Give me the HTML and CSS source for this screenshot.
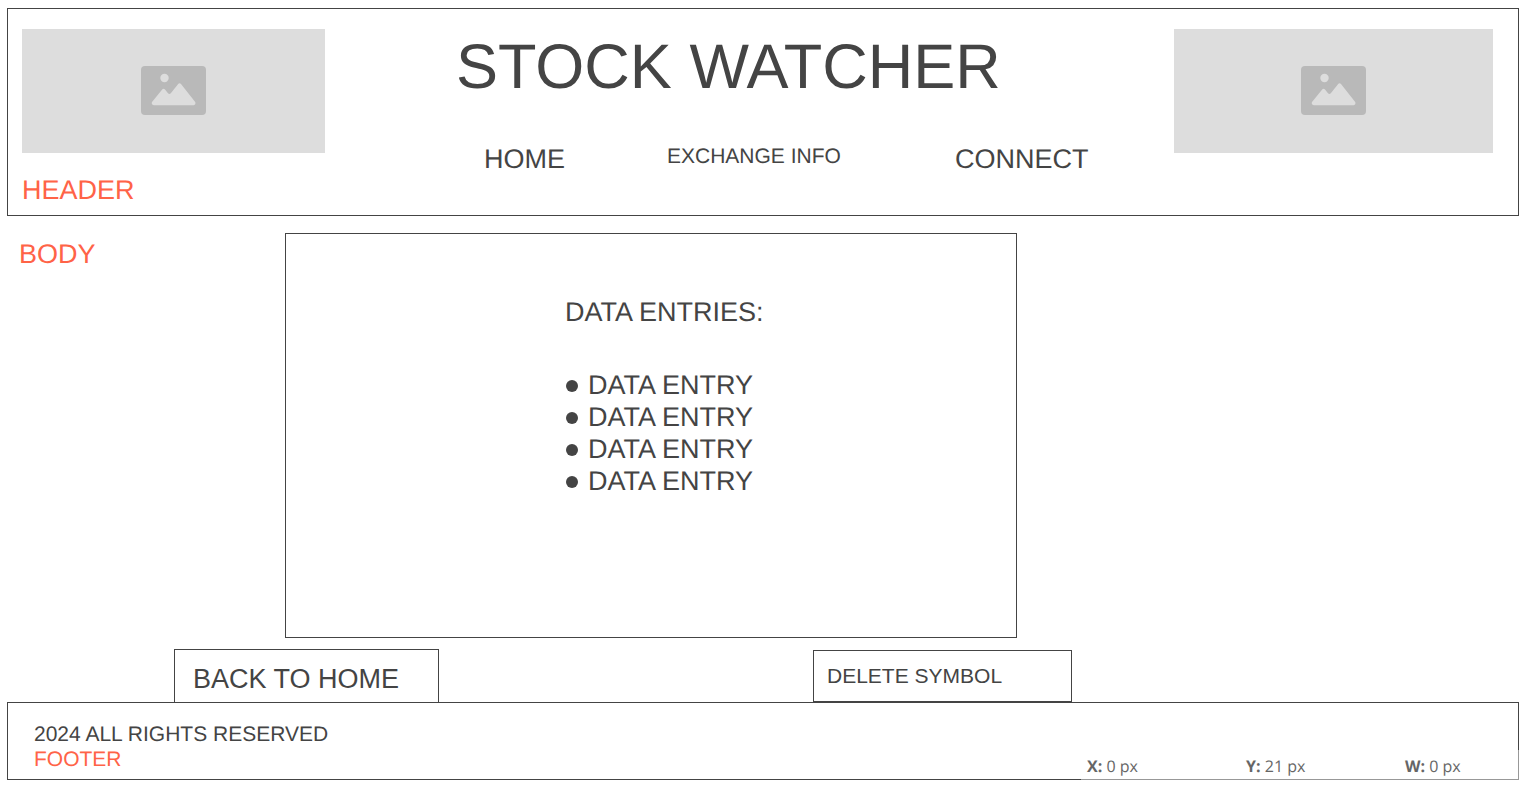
FILE: index.html
```html
<!DOCTYPE html>
<html lang="en">
<head>
<meta charset="utf-8">
<title>Stock Watcher</title>
<link rel="stylesheet" href="styles.css">
</head>
<body>
<header class="header">
  <div class="header-side">
    <div class="placeholder">
      <svg class="placeholder-icon" viewBox="0 0 66 50" aria-hidden="true">
        <rect class="icon-frame" x="0" y="0" width="65" height="49" rx="4"/>
        <circle class="icon-cut" cx="23.5" cy="12" r="4.2"/>
        <path class="icon-cut" d="M11 36 L21.2 23.4 Q22.6 21.9 24 23.4 L27 27.2 Q28.3 28.6 29.8 27.2 L37 18.2 Q38.6 16.4 40.2 18.2 L54.2 36 Q55.2 38.4 52.6 39.2 H12.8 Q10 38.4 11 36Z"/>
      </svg>
    </div>
    <span class="section-label">HEADER</span>
  </div>
  <div class="header-center">
    <h1 class="title">STOCK WATCHER</h1>
    <nav class="nav">
      <a class="nav-link" href="#">HOME</a>
      <a class="nav-link nav-link-small" href="#">EXCHANGE INFO</a>
      <a class="nav-link" href="#">CONNECT</a>
    </nav>
  </div>
  <div class="placeholder">
    <svg class="placeholder-icon" viewBox="0 0 66 50" aria-hidden="true">
      <rect class="icon-frame" x="0" y="0" width="65" height="49" rx="4"/>
      <circle class="icon-cut" cx="23.5" cy="12" r="4.2"/>
      <path class="icon-cut" d="M11 36 L21.2 23.4 Q22.6 21.9 24 23.4 L27 27.2 Q28.3 28.6 29.8 27.2 L37 18.2 Q38.6 16.4 40.2 18.2 L54.2 36 Q55.2 38.4 52.6 39.2 H12.8 Q10 38.4 11 36Z"/>
    </svg>
  </div>
</header>
<main class="main">
  <div class="content">
    <span class="section-label body-label">BODY</span>
    <section class="panel">
      <h2 class="panel-title">DATA ENTRIES:</h2>
      <ul class="entries">
        <li class="entry">DATA ENTRY</li>
        <li class="entry">DATA ENTRY</li>
        <li class="entry">DATA ENTRY</li>
        <li class="entry">DATA ENTRY</li>
      </ul>
    </section>
  </div>
  <div class="actions">
    <button class="button button-back" type="button">BACK TO HOME</button>
    <button class="button button-delete" type="button">DELETE SYMBOL</button>
  </div>
</main>
<footer class="footer">
  <div>2024 ALL RIGHTS RESERVED</div>
  <div class="footer-label">FOOTER</div>
  <div class="status">
    <span><b>X:</b> 0 px</span>
    <span><b>Y:</b> 21 px</span>
    <span><b>W:</b> 0 px</span>
  </div>
</footer>
</body>
</html>
```
FILE: styles.css
```css
* { box-sizing: border-box; }

body {
  margin: 8px 7px;
  background: #fff;
  color: #444;
  font: 27px/32px "Liberation Sans", Arial, sans-serif;
  text-rendering: geometricPrecision;
}

.header {
  display: grid;
  grid-template-columns: 303fr 849fr 319fr;
  align-items: start;
  padding: 20px 25px 9px 14px;
  border: 1px solid #444;
}

.header-side {
  display: flex;
  flex-direction: column;
  gap: 21px;
}

.placeholder {
  display: flex;
  align-items: center;
  justify-content: center;
  height: 124px;
  background: #ddd;
}

.placeholder-icon { width: 66px; height: 50px; }
.icon-frame { fill: #b9b9b9; }
.icon-cut { fill: #ddd; }

.section-label { color: #ff6347; }

.title {
  margin: 2px 0 40px;
  padding-left: 131px;
  font-size: 63px;
  font-weight: 400;
  line-height: 72px;
}

.nav {
  display: grid;
  grid-template-columns: 183fr 288fr 219fr;
  padding-left: 159px;
}

.nav-link { color: inherit; text-decoration: none; }
.nav-link-small { font-size: 21px; line-height: 27px; }

.content {
  display: grid;
  grid-template-columns: 278fr 732fr 502fr;
  padding-top: 17px;
}

.body-label { padding: 5px 0 0 12px; }

.panel {
  min-height: 405px;
  padding: 62px 20px 62px 279px;
  border: 1px solid #444;
}

.panel-title {
  margin: 0 0 41px;
  font-size: 27px;
  font-weight: 400;
}

.entries { margin: 0; padding: 0; list-style: none; }
.entry { display: flex; align-items: center; gap: 10px; }

.entry::before {
  content: "";
  width: 12px;
  height: 12px;
  margin: 2px 0 0 1px;
  border-radius: 50%;
  background: #444;
}

.actions {
  display: grid;
  grid-template-columns: 265fr 374fr 259fr;
  align-items: end;
  margin: 11px 447px 0 167px;
}

.button {
  border: 1px solid #444;
  background: #fff;
  color: inherit;
  font: inherit;
  text-align: left;
}

.button-back { padding: 13px 18px 7px; border-bottom: 0; }

.button-delete {
  grid-column: 3;
  padding: 13px;
  font-size: 21px;
  line-height: 24px;
}

.footer {
  position: relative;
  padding: 19px 26px 7px;
  border: 1px solid #444;
  font-size: 21px;
  line-height: 25px;
}

.footer-label { color: #ff6347; }

.status {
  position: absolute;
  right: -1px;
  bottom: -1px;
  display: grid;
  grid-template-columns: 159fr 159fr 114fr;
  width: 29%;
  padding: 4px 0 2px 6px;
  background: rgba(255, 255, 255, 0.45);
  color: #666;
  font: 16px/24px "Open Sans", sans-serif;
}
```
